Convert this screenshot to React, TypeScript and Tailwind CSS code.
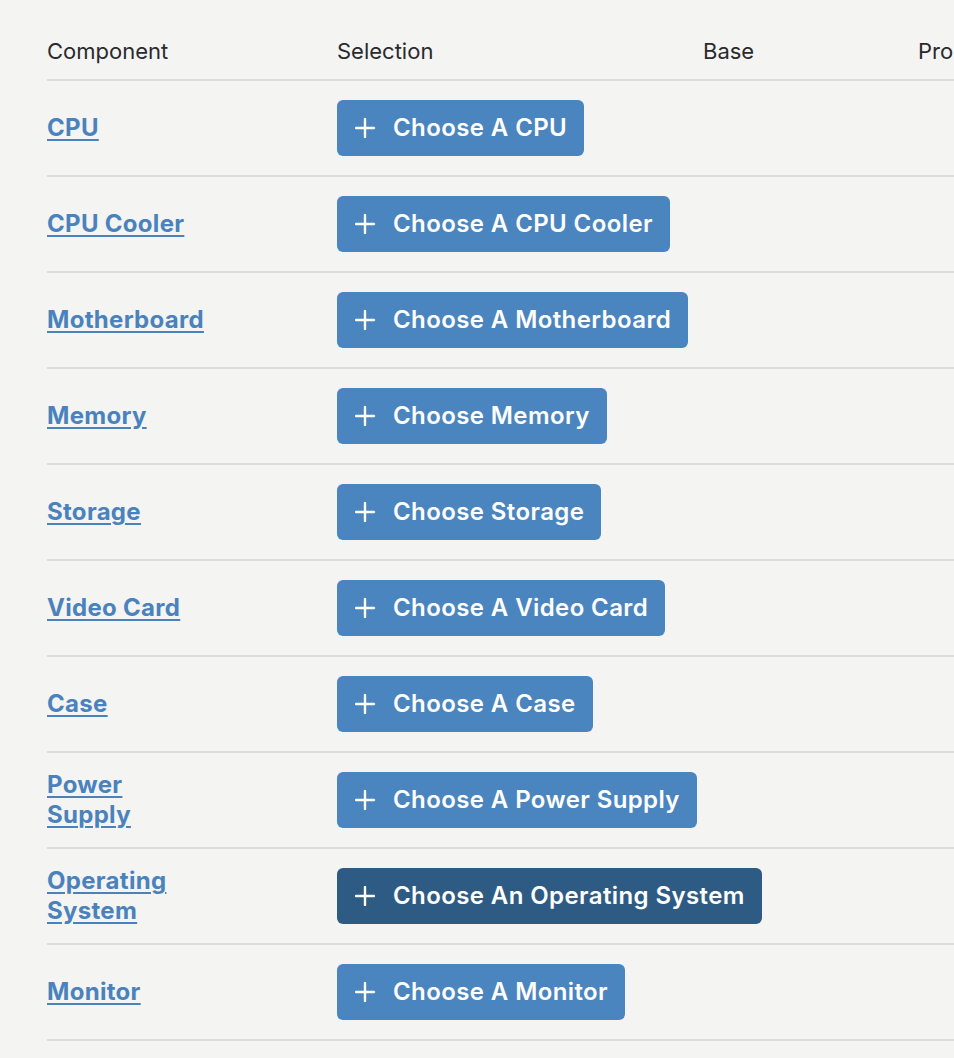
type Part = {
  name: string;
  label: string;
  active?: boolean;
};

const parts: Part[] = [
  { name: 'CPU', label: 'Choose A CPU' },
  { name: 'CPU Cooler', label: 'Choose A CPU Cooler' },
  { name: 'Motherboard', label: 'Choose A Motherboard' },
  { name: 'Memory', label: 'Choose Memory' },
  { name: 'Storage', label: 'Choose Storage' },
  { name: 'Video Card', label: 'Choose A Video Card' },
  { name: 'Case', label: 'Choose A Case' },
  { name: 'Power Supply', label: 'Choose A Power Supply' },
  { name: 'Operating System', label: 'Choose An Operating System', active: true },
  { name: 'Monitor', label: 'Choose A Monitor' },
];

function PlusIcon() {
  return (
    <svg width="20" height="20" viewBox="0 0 20 20" fill="none" stroke="currentColor" strokeWidth="2.4" strokeLinecap="round">
      <path d="M10 1v18M1 10h18" />
    </svg>
  );
}

export default function App() {
  return (
    <div
      className="min-h-[1058px] w-full overflow-hidden bg-[#f4f4f2] pl-[47px]"
      style={{ fontFamily: 'Inter, "Noto Sans", sans-serif' }}
    >
      <div className="w-[1100px]">
        {/* Header */}
        <div className="flex h-[79px] items-end pb-[14px] text-[22px] leading-[28px] text-[#2a2a2e]">
          <div className="w-[290px]">Component</div>
          <div className="w-[366px]">Selection</div>
          <div className="w-[215px]">Base</div>
          <div>Promo</div>
        </div>

        {/* Rows */}
        {parts.map((part) => (
          <div
            key={part.name}
            className="flex h-[96px] items-center border-t-2 border-[#dcdcda]"
          >
            <div className="w-[290px]">
              <a
                href="#"
                className="block max-w-[150px] text-[24px] font-bold leading-[30px] tracking-[0.3px] text-[#4a82bd] underline decoration-2 underline-offset-[3px]"
              >
                {part.name}
              </a>
            </div>
            <button
              className={
                'flex h-[56px] items-center gap-[18px] rounded-[6px] pl-[18px] pr-[17px] text-[24px] font-semibold tracking-[0.4px] text-white ' +
                (part.active ? 'bg-[#2e5b83]' : 'bg-[#4a85c0]')
              }
            >
              <PlusIcon />
              <span>{part.label}</span>
            </button>
          </div>
        ))}
        <div className="border-t-2 border-[#dcdcda]" />
      </div>
    </div>
  );
}
